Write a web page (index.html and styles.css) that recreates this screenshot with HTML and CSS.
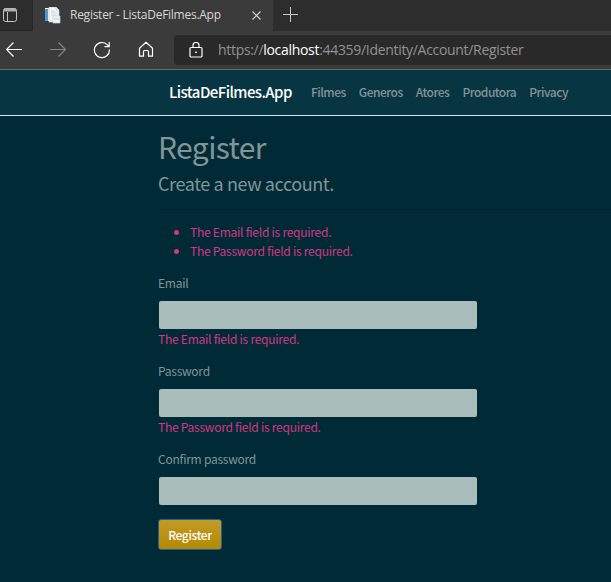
FILE: index.html
```
<!DOCTYPE html>
<html lang="en">
<head>
<meta charset="utf-8">
<title>Register - ListaDeFilmes.App</title>
<link rel="stylesheet" href="styles.css">
</head>
<body>
<div class="browser">
  <div class="tabstrip">
    <div class="tab-actions">
      <svg width="16" height="16" viewBox="0 0 16 16" fill="none" stroke="#c4c4c4"><rect x="1.500" y="1.500" width="13" height="13" rx="2"/><path d="M2 3h12" stroke-width="3" stroke="#b0b0b0"/><path d="M5.500 5v9"/></svg>
    </div>
    <div class="tab">
      <svg class="favicon" width="17" height="17" viewBox="0 0 17 17"><path d="M1 1h11v13H1z" fill="#f4f6f8"/><path d="M1 2h3v12H1z" fill="#4c9bd0"/><path d="M5 0h7l3 3v12H5z" fill="#f5f5f5" stroke="#c3ccd3" stroke-width=".7"/><path d="M12 0v3h3M7 4h4M7 6h6M7 8h5" fill="none" stroke="#c6d0d8" stroke-width=".8"/><path d="M9 9h7v7H9z" fill="#f4f4f4" stroke="#c9cdd1" stroke-width=".7"/><path d="M10 12h5" stroke="#bcc8d0"/></svg>
      <span class="tab-title">Register - ListaDeFilmes.App</span>
      <svg class="close" width="9" height="9" viewBox="0 0 9 9" stroke="#d0d0d0" stroke-width="1.2"><path d="M.5.5l8 8M8.500.5l-8 8"/></svg>
    </div>
    <svg class="plus" width="15" height="15" viewBox="0 0 15 15" stroke="#c8c8c8"><path d="M7.500 0v15M0 7.500h15"/></svg>
  </div>
  <div class="toolbar">
    <svg class="back" width="16" height="15" viewBox="0 0 16 15" fill="none" stroke="#fff" stroke-width="1.2"><path d="M7.500.5l-7 7 7 7M.5 7.500H16"/></svg>
    <svg class="forward" width="16" height="15" viewBox="0 0 16 15" fill="none" stroke="#858585" stroke-width="1.2"><path d="M8.500.5l7 7-7 7M15.500 7.500H0"/></svg>
    <svg class="reload" width="18" height="18" viewBox="0 0 18 18" fill="none" stroke="#fff" stroke-width="1.2"><path d="M16.400 8.500a7.500 7.500 0 1 1-2.300-4.900L16 5.600M16.200 1v4.700h-4.700"/></svg>
    <svg class="home" width="16" height="17" viewBox="0 0 16 17" fill="none" stroke="#fff" stroke-width="1.2"><path d="M1.500 7.200L8 1.200l6.500 6v8h-4V10.500a1 1 0 0 0-1-1h-3a1 1 0 0 0-1 1v4.700h-4z" stroke-linejoin="round"/></svg>
    <div class="address">
      <svg class="lock" width="14" height="16" viewBox="0 0 14 16" fill="none" stroke="#fff" stroke-width="1.200"><rect x="1" y="5.500" width="12" height="9.500" rx="1"/><path d="M4 5.500V3.500a3 3 0 0 1 6 0v2"/><path d="M6.200 10.200h1.600" stroke-width="1.600"/></svg>
      <span class="url">https://<b>localhost</b>:44359/Identity/Account/Register</span>
    </div>
  </div>
</div>
<nav class="navbar">
  <span class="brand">ListaDeFilmes.App</span>
  <span class="link">Filmes</span>
  <span class="link">Generos</span>
  <span class="link">Atores</span>
  <span class="link">Produtora</span>
  <span class="link">Privacy</span>
</nav>
<main>
  <h1>Register</h1>
  <h4>Create a new account.</h4>
  <hr>
  <ul class="error"><li>The Email field is required.</li><li>The Password field is required.</li></ul>
  <div class="group"><label for="email">Email</label><input id="email"><span class="error">The Email field is required.</span></div>
  <div class="group"><label for="password">Password</label><input id="password" type="password"><span class="error">The Password field is required.</span></div>
  <div class="group last"><label for="confirm">Confirm password</label><input id="confirm" type="password"></div>
  <button>Register</button>
</main>
</body>
</html>
```
FILE: styles.css
```
* { box-sizing: border-box; }
body {
  margin: 0;
  height: 582px;
  overflow: hidden;
  background: #002b36;
  color: #839496;
  font: 12px/19px "Noto Sans CJK JP", sans-serif;
  letter-spacing: -.25px;
}
svg { display: block; flex: none; }
.browser { font-family: "Open Sans", sans-serif; background: #3b3b3b; }
.tabstrip { display: flex; height: 31px; background: #2d2d2d; }
.tab-actions { width: 33px; padding: 7px 0 0 2px; border-right: 1px solid #262626; border-bottom: 1px solid #262626; border-bottom-right-radius: 3px; }
.tab { display: flex; width: 240px; background: #3b3b3b; }
.favicon { margin: 7px 9px 0 11px; }
.tab-title { flex: 1; color: #d6d6d6; font-size: 12px; line-height: 30px; white-space: nowrap; letter-spacing: -.26px; }
.close { margin: 11px 12px 0 0; }
.plus { margin: 7px 0 0 10px; }
.toolbar { display: flex; height: 39px; border-bottom: 1px solid #686b6b; }
.back { margin: 11px 0 0 6px; }
.forward { margin: 11px 0 0 28px; }
.reload { margin: 10px 0 0 27px; }
.home { margin: 10px 0 0 27px; }
.address { display: flex; flex: 1; height: 30px; margin: 4px 0 0 20px; background: #292929; border-radius: 4px 0 0 4px; }
.lock { margin: 7px 0 0 15px; }
.url { margin-left: 15px; color: #929292; font-size: 14px; line-height: 30px; white-space: nowrap; letter-spacing: -.31px; }
.url b { color: #fff; font-weight: 400; }
.navbar { display: flex; height: 46px; padding-left: 169px; background: #073642; border-bottom: 1px solid #dce7e8; line-height: 44px; }
.brand { width: 142px; color: #fff; font-size: 15px; font-weight: 500; letter-spacing: -.57px; }
.link { margin-right: 13.1px; font-weight: 500; letter-spacing: -.5px; }
main { width: 319px; margin-left: 158px; }
h1 { margin: 11px 0 0; font-size: 30px; line-height: 38px; font-weight: 400; letter-spacing: -.6px; }
h4 { margin: 7px 0 0; font-size: 18px; line-height: 22px; font-weight: 400; letter-spacing: -.4px; }
hr { width: 453px; margin: 15px 0 12px; border: 0; border-top: 1px solid #00252f; }
ul { margin: 0 0 13px; padding-left: 32px; }
.error { color: #d33682; }
.group { height: 88px; }
.group.last { height: 70px; }
label { display: block; height: 28px; }
input { display: block; width: 318px; height: 28px; margin-left: 1px; padding: 4px 8px; border: 0; border-radius: 2px; background: #a9bdbb; outline: 0; }
.group .error { display: block; line-height: 19px; }
button { display: block; width: 64px; height: 31px; margin: 0; padding: 0; border: 1px solid #1b639c; border-radius: 3px; background: linear-gradient(#c29b28, #b58900); color: #fff; font: 500 12px/28px "Noto Sans CJK JP", sans-serif; letter-spacing: -.35px; }
```
